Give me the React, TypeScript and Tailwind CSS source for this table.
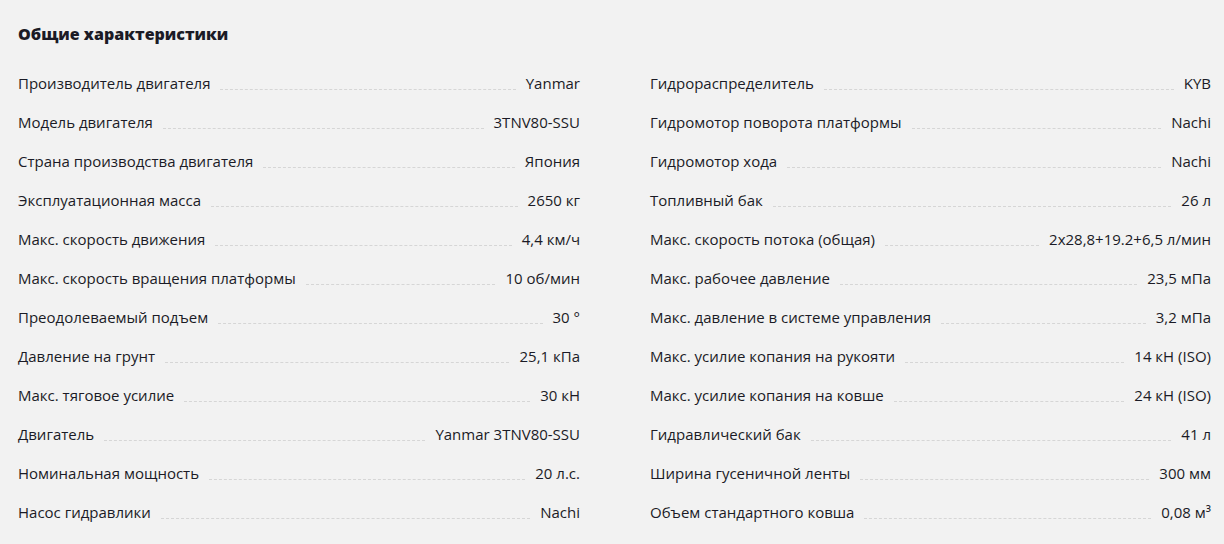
import React from 'react';

type Spec = { label: string; value: string };

const left: Spec[] = [
  { label: 'Производитель двигателя', value: 'Yanmar' },
  { label: 'Модель двигателя', value: '3TNV80-SSU' },
  { label: 'Страна производства двигателя', value: 'Япония' },
  { label: 'Эксплуатационная масса', value: '2650 кг' },
  { label: 'Макс. скорость движения', value: '4,4 км/ч' },
  { label: 'Макс. скорость вращения платформы', value: '10 об/мин' },
  { label: 'Преодолеваемый подъем', value: '30 °' },
  { label: 'Давление на грунт', value: '25,1 кПа' },
  { label: 'Макс. тяговое усилие', value: '30 кН' },
  { label: 'Двигатель', value: 'Yanmar 3TNV80-SSU' },
  { label: 'Номинальная мощность', value: '20 л.с.' },
  { label: 'Насос гидравлики', value: 'Nachi' },
];

const right: Spec[] = [
  { label: 'Гидрораспределитель', value: 'KYB' },
  { label: 'Гидромотор поворота платформы', value: 'Nachi' },
  { label: 'Гидромотор хода', value: 'Nachi' },
  { label: 'Топливный бак', value: '26 л' },
  { label: 'Макс. скорость потока (общая)', value: '2x28,8+19.2+6,5 л/мин' },
  { label: 'Макс. рабочее давление', value: '23,5 мПа' },
  { label: 'Макс. давление в системе управления', value: '3,2 мПа' },
  { label: 'Макс. усилие копания на рукояти', value: '14 кН (ISO)' },
  { label: 'Макс. усилие копания на ковше', value: '24 кН (ISO)' },
  { label: 'Гидравлический бак', value: '41 л' },
  { label: 'Ширина гусеничной ленты', value: '300 мм' },
  { label: 'Объем стандартного ковша', value: '0,08 м³' },
];

const SpecRow: React.FC<Spec> = ({ label, value }) => (
  <div className="flex items-end h-[39px] pb-[10px]">
    <span className="whitespace-nowrap">{label}</span>
    <span className="flex-1 mx-[10px] mb-[4px] border-b border-dashed border-[#d6d6d6]" />
    <span className="whitespace-nowrap">{value}</span>
  </div>
);

const App: React.FC = () => {
  return (
    <div
      className="w-[1224px] h-[544px] bg-[#f2f2f2] text-[#1b1b26] px-[18px] pt-[22px]"
      style={{ fontFamily: '"Open Sans", "Noto Sans", sans-serif' }}
    >
      <h2 className="text-[16px] font-extrabold leading-[24px] mb-[19px]">Общие характеристики</h2>
      <div className="grid grid-cols-[562px_561px] gap-x-[70px] text-[15px]">
        <div>
          {left.map((s) => (
            <SpecRow key={s.label} {...s} />
          ))}
        </div>
        <div>
          {right.map((s) => (
            <SpecRow key={s.label} {...s} />
          ))}
        </div>
      </div>
    </div>
  );
};

export default App;
